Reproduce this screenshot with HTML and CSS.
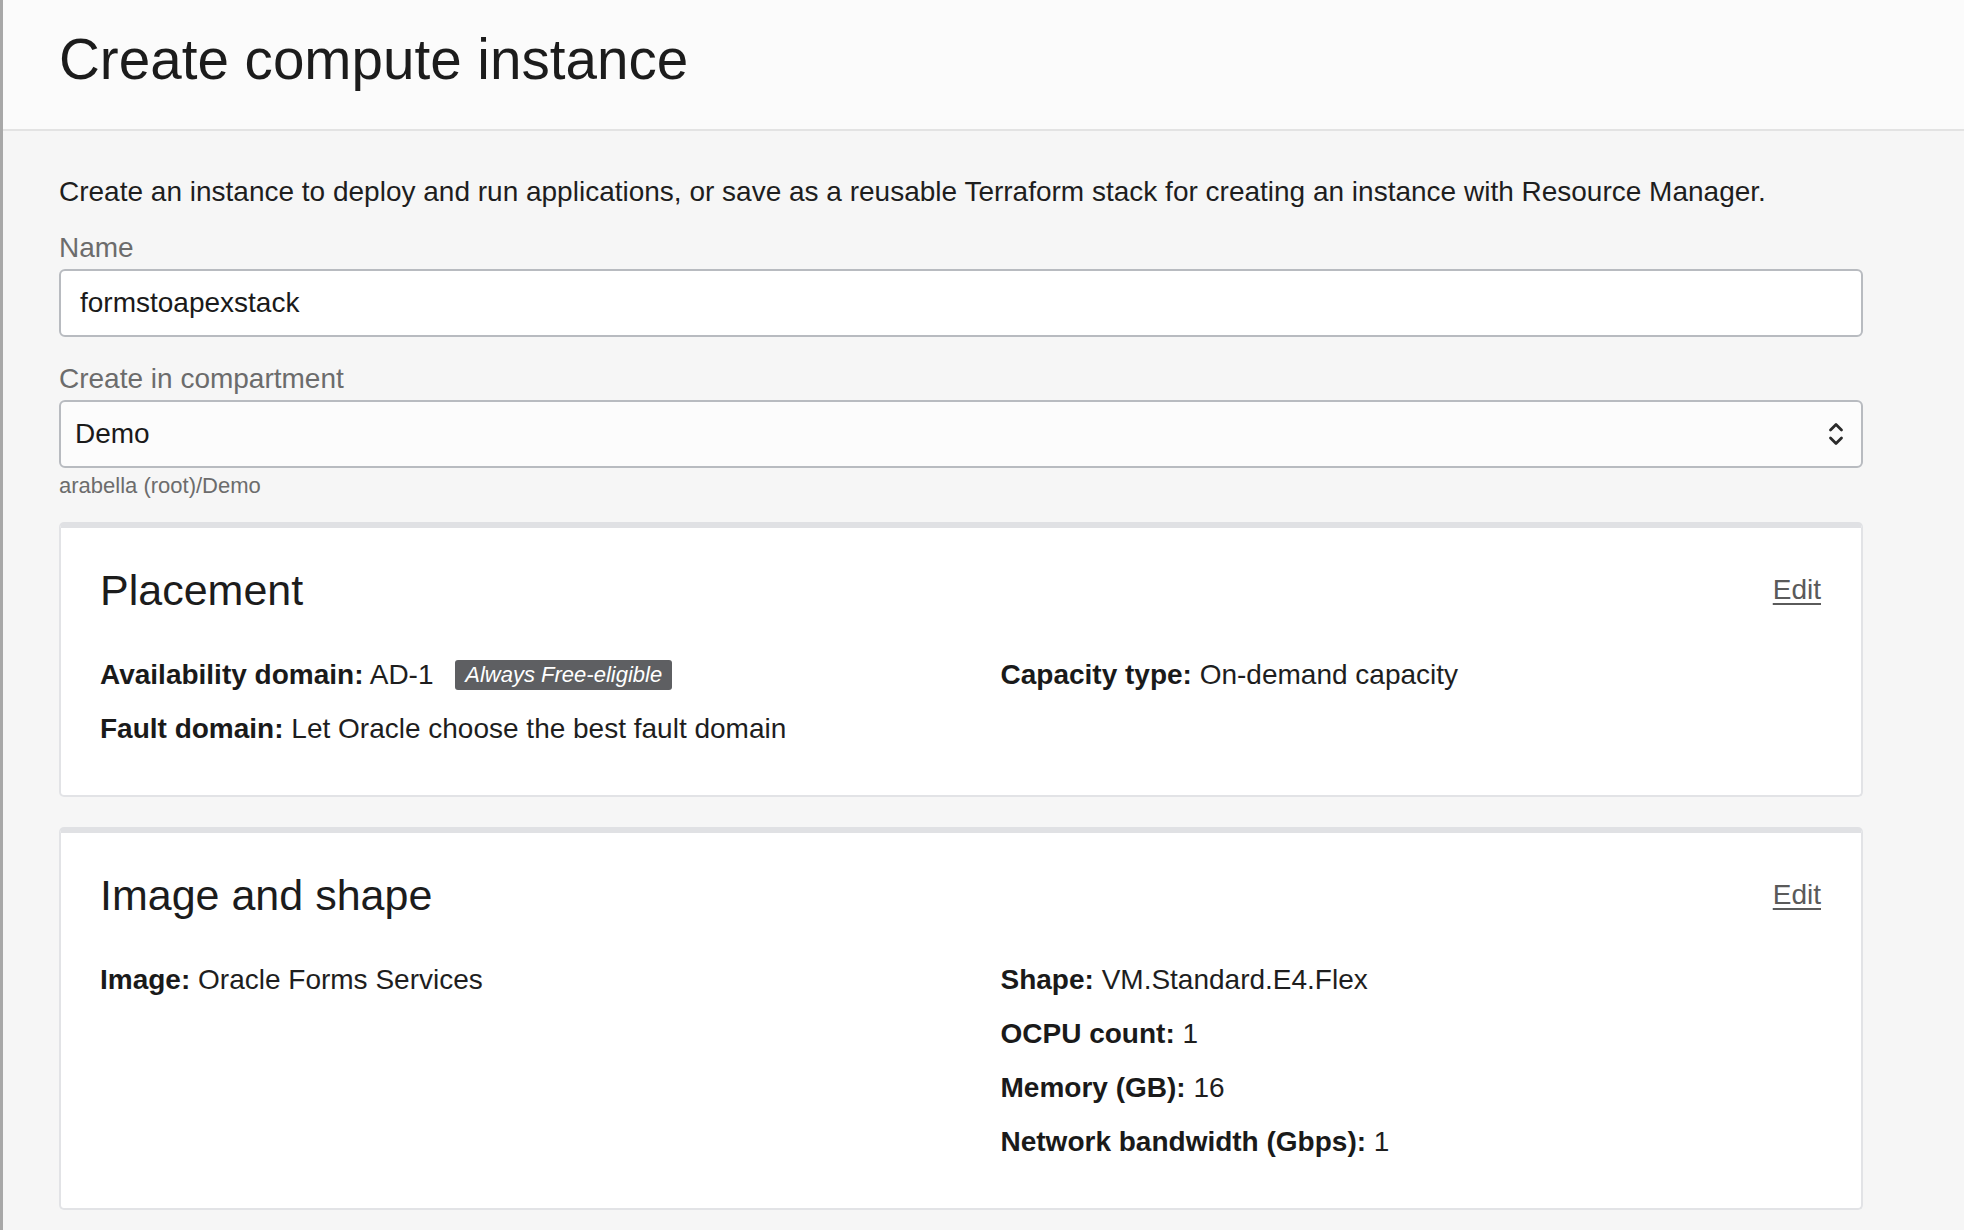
FILE: index.html
```html
<!DOCTYPE html>
<html lang="en">
<head>
<meta charset="utf-8">
<title>Create compute instance</title>
<link rel="stylesheet" href="styles.css">
</head>
<body>
<div class="page">
  <header class="page-header">
    <h1 class="page-title">Create compute instance</h1>
  </header>
  <main class="content">
    <p class="intro">Create an instance to deploy and run applications, or save as a reusable Terraform stack for creating an instance with Resource Manager.</p>

    <div class="field">
      <label class="field-label">Name</label>
      <div class="input">formstoapexstack</div>
    </div>

    <div class="field field-second">
      <label class="field-label">Create in compartment</label>
      <div class="select">
        <span>Demo</span>
        <svg class="chevrons" width="16" height="26" viewBox="0 0 16 26" aria-hidden="true">
          <path d="M2.5 9 L8 3.5 L13.5 9" fill="none" stroke="#2a2a2a" stroke-width="2.8" stroke-linecap="round" stroke-linejoin="round"/>
          <path d="M2.5 17 L8 22.5 L13.5 17" fill="none" stroke="#2a2a2a" stroke-width="2.8" stroke-linecap="round" stroke-linejoin="round"/>
        </svg>
      </div>
      <div class="helper">arabella (root)/Demo</div>
    </div>

    <section class="card">
      <div class="card-head">
        <h2 class="card-title">Placement</h2>
        <a class="edit" href="#">Edit</a>
      </div>
      <div class="card-grid">
        <div class="col">
          <div class="row"><b>Availability domain:</b> AD-1 <span class="badge">Always Free-eligible</span></div>
          <div class="row"><b>Fault domain:</b> Let Oracle choose the best fault domain</div>
        </div>
        <div class="col">
          <div class="row"><b>Capacity type:</b> On-demand capacity</div>
        </div>
      </div>
    </section>

    <section class="card">
      <div class="card-head">
        <h2 class="card-title">Image and shape</h2>
        <a class="edit" href="#">Edit</a>
      </div>
      <div class="card-grid">
        <div class="col">
          <div class="row"><b>Image:</b> Oracle Forms Services</div>
        </div>
        <div class="col">
          <div class="row"><b>Shape:</b> VM.Standard.E4.Flex</div>
          <div class="row"><b>OCPU count:</b> 1</div>
          <div class="row"><b>Memory (GB):</b> 16</div>
          <div class="row"><b>Network bandwidth (Gbps):</b> 1</div>
        </div>
      </div>
    </section>
  </main>
</div>
</body>
</html>
```

FILE: styles.css
```css
html, body {
  margin: 0;
  padding: 0;
}
body {
  background: #f6f6f6;
  font-family: "Liberation Sans", Arial, Helvetica, sans-serif;
  color: #161513;
}
.page {
  min-height: 1230px;
  border-left: 3px solid #a8a8a8;
  box-sizing: border-box;
}
.page-header {
  height: 131px;
  box-sizing: border-box;
  background: #fbfbfb;
  border-bottom: 2px solid #e3e3e3;
  padding: 26px 0 0 56px;
}
.page-title {
  margin: 0;
  font-weight: 400;
  font-size: 56.6px;
  line-height: 68px;
  color: #1c1c1c;
}
.content {
  padding: 42px 101px 30px 56px;
}
.intro {
  margin: 0 0 20px;
  font-size: 28px;
  line-height: 38px;
  color: #1e1e1e;
}
.field-label {
  display: block;
  font-size: 28px;
  line-height: 34px;
  color: #6c6c6c;
  margin-bottom: 4px;
}
.field-second {
  margin-top: 25px;
}
.input,
.select {
  height: 68px;
  box-sizing: border-box;
  border: 2px solid #b8bbc0;
  border-radius: 6px;
  display: flex;
  align-items: center;
  font-size: 28px;
  color: #1a1a1a;
}
.input {
  background: #ffffff;
  padding-left: 19px;
}
.select {
  background: #fcfcfc;
  padding: 0 17px 0 14px;
  justify-content: space-between;
}
.chevrons {
  display: block;
}
.helper {
  margin-top: 4px;
  font-size: 22px;
  line-height: 28px;
  color: #6c6c6c;
}
.card {
  margin-top: 22px;
  background: #ffffff;
  border: 2px solid #e2e3e6;
  border-top: 6px solid #e0e1e4;
  border-radius: 5px;
  padding: 36px 40px 47px 39px;
}
.card + .card {
  margin-top: 30px;
}
.card-head {
  display: flex;
  justify-content: space-between;
  align-items: center;
}
.card-title {
  margin: 0;
  font-weight: 400;
  font-size: 43px;
  line-height: 52px;
  color: #1c1c1c;
}
.edit {
  font-size: 28px;
  color: #5a5a5a;
  text-decoration: underline;
  text-underline-offset: 4px;
}
.card-grid {
  display: grid;
  grid-template-columns: 1fr 1fr;
  column-gap: 80px;
  margin-top: 40px;
}
.row {
  font-size: 28px;
  line-height: 38px;
  color: #1e1e1e;
  display: flex;
  align-items: center;
  white-space: pre;
}
.row + .row {
  margin-top: 16px;
}
.row b {
  font-weight: 700;
  color: #1a1a1a;
}
.badge {
  margin-left: 14px;
  background: #5e5f62;
  color: #ffffff;
  font-style: italic;
  font-size: 22px;
  line-height: 30px;
  padding: 0 10px;
  border-radius: 3px;
}
```
